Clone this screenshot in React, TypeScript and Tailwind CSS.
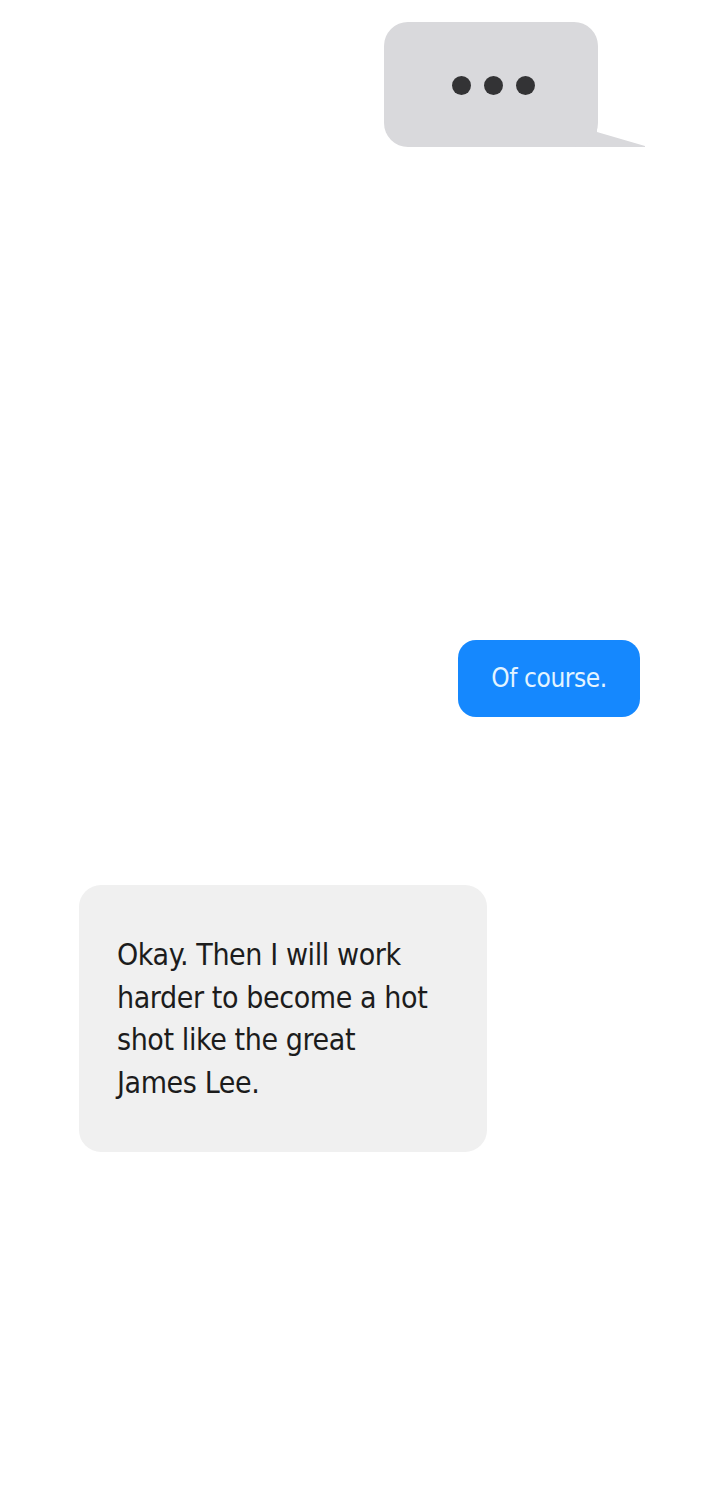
const font = {
  fontFamily: '"Liberation Sans Narrow", "DejaVu Sans Condensed", "Roboto", sans-serif',
};

const TypingBubble = () => (
  <div className="relative w-[214px] h-[125px] ml-[384px] mt-[22px]">
    <svg className="absolute left-[190px] top-[100px]" width="72" height="25" viewBox="0 0 72 25">
      <path d="M0 0 L23 0 L23 10 L71 24 L71 25 L0 25 Z" fill="#d9d9dc" />
    </svg>
    <div className="absolute inset-0 bg-[#d9d9dc] rounded-[24px] flex items-center justify-center gap-[13px] pl-[4px] pt-[2px]">
      <span className="w-[19px] h-[19px] rounded-full bg-[#333335]" />
      <span className="w-[19px] h-[19px] rounded-full bg-[#333335]" />
      <span className="w-[19px] h-[19px] rounded-full bg-[#333335]" />
    </div>
  </div>
);

export default function App() {
  return (
    <div className="w-[720px] h-[1500px] bg-white flex flex-col" style={font}>
      <TypingBubble />

      <div className="self-end mr-[80px] mt-[493px] w-[182px] h-[77px] rounded-[18px] bg-[#1588fe] flex items-center justify-center">
        <span className="text-[#e3f4ff] text-[26px] leading-none tracking-[-0.4px] -mt-[2px]">Of course.</span>
      </div>

      <div className="ml-[79px] mt-[168px] w-[408px] h-[267px] rounded-[22px] bg-[#f0f0f0] pl-[38px] pt-[49px]">
        <p className="text-[#1c1c1c] text-[30px] leading-[42.5px] tracking-[-0.4px] w-[316px]">
          Okay. Then I will work harder to become a hot shot like the great James Lee.
        </p>
      </div>
    </div>
  );
}
